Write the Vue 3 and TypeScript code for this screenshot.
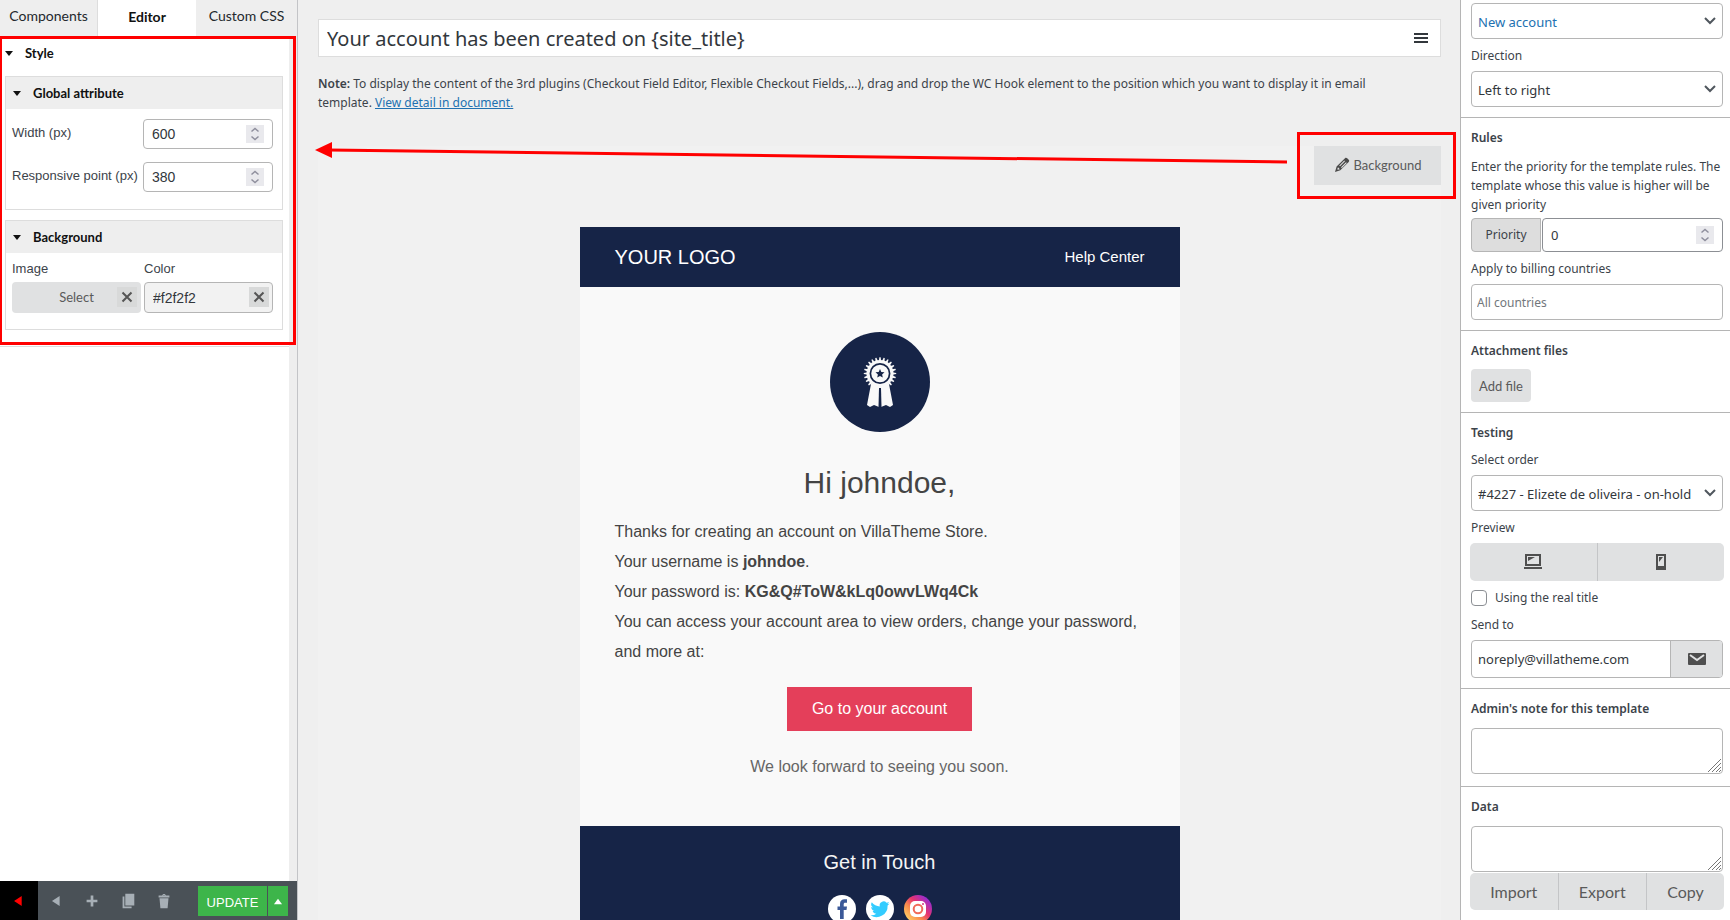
<script setup lang="ts">
import { ref } from 'vue'

const tabs = ['Components', 'Editor', 'Custom CSS']
const activeTab = ref('Editor')
const subject = ref('Your account has been created on {site_title}')
const width = ref(600)
const responsive = ref(380)
const color = ref('#f2f2f2')
const priority = ref(0)
const countries = ref('')
const realTitle = ref(false)
const sendTo = ref('noreply@villatheme.com')
const note = ref('')
const data = ref('')
const dataActions = ['Import', 'Export', 'Copy']

const teeth = Array.from({ length: 24 }, (_, i) => i * 15)
</script>

<template>
  <div class="app">
    <aside class="left">
      <nav class="tabs">
        <button
          v-for="tab in tabs"
          :key="tab"
          type="button"
          class="tab"
          :class="{ active: tab === activeTab }"
          @click="activeTab = tab"
        >{{ tab }}</button>
      </nav>

      <div class="panel">
        <div class="style-area">
          <h2 class="style-title"><i class="caret"></i>Style</h2>

          <section class="group">
            <h3 class="group-title"><i class="caret"></i>Global attribute</h3>
            <div class="group-body">
              <div class="attr">
                <label for="width">Width (px)</label>
                <div class="number">
                  <input id="width" v-model="width" type="number" />
                  <span class="spin"><svg viewBox="0 0 18 18"><path d="M5.500 6.500 9 3.500l3.500 3M5.500 11.500 9 14.500l3.500-3" /></svg></span>
                </div>
              </div>
              <div class="attr">
                <label for="responsive">Responsive point (px)</label>
                <div class="number">
                  <input id="responsive" v-model="responsive" type="number" />
                  <span class="spin"><svg viewBox="0 0 18 18"><path d="M5.500 6.500 9 3.500l3.500 3M5.500 11.500 9 14.500l3.500-3" /></svg></span>
                </div>
              </div>
            </div>
          </section>

          <section class="group">
            <h3 class="group-title"><i class="caret"></i>Background</h3>
            <div class="pair">
              <div class="cell">
                <span class="cell-label">Image</span>
                <div class="picker">
                  <button type="button" class="select-image">Select</button>
                  <button type="button" class="clear" aria-label="Clear image"><svg viewBox="0 0 20 20"><path d="m5.500 5.500 9 9m0-9-9 9" /></svg></button>
                </div>
              </div>
              <div class="cell">
                <label class="cell-label" for="color">Color</label>
                <div class="picker">
                  <input id="color" v-model="color" type="text" class="color-input" />
                  <button type="button" class="clear" aria-label="Clear color"><svg viewBox="0 0 20 20"><path d="m5.500 5.500 9 9m0-9-9 9" /></svg></button>
                </div>
              </div>
            </div>
          </section>
          <div class="mark mark-panel"></div>
        </div>
      </div>

      <footer class="toolbar">
        <button type="button" class="tool tool-exit" aria-label="Exit"><svg viewBox="0 0 20 20"><path d="M13 4.500v11L4.500 10z" /></svg></button>
        <button type="button" class="tool" aria-label="Back"><svg viewBox="0 0 20 20"><path d="M14 4.500v11L5.500 10z" /></svg></button>
        <button type="button" class="tool" aria-label="Add"><svg viewBox="0 0 20 20"><path d="M8.500 4h3v4.500H16v3h-4.500V16h-3v-4.500H4v-3h4.500z" /></svg></button>
        <button type="button" class="tool" aria-label="Duplicate"><svg viewBox="0 0 20 20"><path d="M7 2h10v13H7zM4 5h2v11h8v2H4z" /></svg></button>
        <button type="button" class="tool" aria-label="Delete"><svg viewBox="0 0 20 20"><path d="M8 4c0-2.500 4-2.500 4 0h4v2H4V4h4zm1 0h2c0-1-2-1-2 0zM5 7h10l-1 11H6z" /></svg></button>
        <div class="update">
          <button type="button" class="update-main">UPDATE</button>
          <button type="button" class="update-more" aria-label="More update options"><svg viewBox="0 0 20 20"><path d="m5.500 13.500 4.500-6 4.500 6z" /></svg></button>
        </div>
      </footer>
    </aside>

    <main class="main">
      <div class="subject">
        <input v-model="subject" type="text" aria-label="Email subject" />
        <button type="button" class="menu" aria-label="Shortcodes"><svg viewBox="0 0 14 10"><path d="M0 0h14v2H0zM0 4h14v2H0zM0 8h14v2H0z" /></svg></button>
      </div>
      <p class="note">
        <strong>Note:</strong> To display the content of the 3rd plugins (Checkout Field Editor, Flexible Checkout Fields,...), drag and drop the WC Hook element to the position which you want to display it in email template. <a href="#">View detail in document.</a>
      </p>

      <div class="canvas">
        <div class="canvas-top">
          <svg class="arrow" height="24">
            <line x1="14" y1="9" x2="100%" y2="21" />
            <polygon points="0,9 17,1 17,17" />
          </svg>
          <div class="bg-wrap">
            <button type="button" class="bg-button">
              <svg viewBox="0 0 16 16"><path d="M11 1.200c.8-.7 1.500-.5 2.200.1l1.500 1.500c.6.700.7 1.400 0 2.100L6.300 13.300 1 15l1.600-5.500zM4 10.200l-.7 2 .6.600 2-.6zM10.300 3.600 5.200 8.700l.8.600 5-5zM12 5.200l-5 5 .8.800 5-5z" fill-rule="evenodd" /></svg>
              Background
            </button>
            <div class="mark mark-button"></div>
          </div>
        </div>

        <article class="email">
          <header class="email-head">
            <span class="logo">YOUR LOGO</span>
            <a href="#" class="help">Help Center</a>
          </header>
          <div class="email-body">
            <svg class="badge" viewBox="0 0 100 100">
              <circle cx="50" cy="50" r="50" fill="#162447" />
              <g fill="#f9f9f9">
                <path d="M41 52h18l4 21-3 2-4-2-5 2-.5-19h-1L49 75l-5-2-4 2-3-2z" />
                <circle cx="50" cy="41.500" r="13.500" />
                <path v-for="a in teeth" :key="a" d="M48.700 29.500 49.400 25.300h1.200l.7 4.200z" :transform="`rotate(${a} 50 41.5)`" />
              </g>
              <circle cx="50" cy="41.500" r="9.600" fill="none" stroke="#162447" stroke-width="1.700" />
              <path d="m50 37 1.300 3 3.200.3-2.400 2.100.7 3.200-2.800-1.700-2.800 1.700.7-3.200-2.400-2.100 3.200-.3z" fill="#162447" />
              <path d="M49 56h2l.5 19h-3z" fill="#162447" />
            </svg>
            <h1 class="greeting">Hi johndoe,</h1>
            <div class="copy">
              <p>Thanks for creating an account on VillaTheme Store.</p>
              <p>Your username is <b>johndoe</b>.</p>
              <p>Your password is: <b>KG&amp;Q#ToW&amp;kLq0owvLWq4Ck</b></p>
              <p>You can access your account area to view orders, change your password, and more at:</p>
            </div>
            <a href="#" class="cta">Go to your account</a>
            <p class="closing">We look forward to seeing you soon.</p>
          </div>
          <footer class="email-foot">
            <h2>Get in Touch</h2>
            <div class="social">
              <a href="#" aria-label="Facebook"><svg viewBox="0 0 28 28"><circle cx="14" cy="14" r="14" fill="#fff" /><path d="M12 24v-9H9.500v-3.500H12V9c0-3.200 1.800-4.700 4.600-4.700H19v3.400h-1.700c-1.200 0-1.600.6-1.600 1.600v2.200H19l-.5 3.500h-2.800v9z" fill="#3b5998" /></svg></a>
              <a href="#" aria-label="Twitter"><svg viewBox="0 0 28 28"><circle cx="14" cy="14" r="14" fill="#fff" /><path d="M23.500 8.400c-.7.300-1.400.5-2.200.6.800-.5 1.400-1.200 1.700-2.100-.8.400-1.600.8-2.500.9a3.900 3.900 0 0 0-6.700 3.600c-3.200-.2-6.100-1.700-8-4.100a3.900 3.900 0 0 0 1.200 5.200c-.6 0-1.200-.2-1.800-.5 0 1.900 1.300 3.500 3.200 3.900-.6.200-1.200.2-1.800.1.500 1.600 2 2.700 3.700 2.700A7.900 7.900 0 0 1 4.500 20.300a11.100 11.100 0 0 0 17.100-9.900c.8-.5 1.400-1.200 1.900-2z" fill="#33ccff" /></svg></a>
              <a href="#" aria-label="Instagram"><svg viewBox="0 0 28 28"><defs><linearGradient id="insta" x1="0.100" y1="0.900" x2="0.900" y2="0.100"><stop offset="0" stop-color="#ffd567" /><stop offset="0.350" stop-color="#f98a4b" /><stop offset="0.600" stop-color="#e6336f" /><stop offset="1" stop-color="#8a2be0" /></linearGradient></defs><circle cx="14" cy="14" r="14" fill="url(#insta)" /><rect x="6" y="6" width="16" height="16" rx="5" fill="#fff" /><circle cx="14" cy="14" r="4.300" fill="none" stroke="#f06a58" stroke-width="2" /><circle cx="19" cy="9" r="1" fill="#d63384" /></svg></a>
            </div>
          </footer>
        </article>
      </div>
    </main>

    <aside class="right">
      <section class="box box-first">
        <div class="select">
          <select class="blue" aria-label="Email type"><option>New account</option></select>
          <svg viewBox="0 0 12 8"><path d="m1 1 5 5 5-5" /></svg>
        </div>
        <label class="field-label" for="direction">Direction</label>
        <div class="select">
          <select id="direction"><option>Left to right</option></select>
          <svg viewBox="0 0 12 8"><path d="m1 1 5 5 5-5" /></svg>
        </div>
      </section>

      <section class="box">
        <h2 class="box-title">Rules</h2>
        <p class="hint">Enter the priority for the template rules. The template whose this value is higher will be given priority</p>
        <div class="priority">
          <label for="priority">Priority</label>
          <div class="number">
            <input id="priority" v-model="priority" type="number" />
            <span class="spin"><svg viewBox="0 0 18 18"><path d="M5.500 6.500 9 3.500l3.500 3M5.500 11.500 9 14.500l3.500-3" /></svg></span>
          </div>
        </div>
        <label class="field-label" for="countries">Apply to billing countries</label>
        <input id="countries" v-model="countries" class="text-input" type="text" placeholder="All countries" />
      </section>

      <section class="box">
        <h2 class="box-title">Attachment files</h2>
        <button type="button" class="add-file">Add file</button>
      </section>

      <section class="box">
        <h2 class="box-title">Testing</h2>
        <label class="field-label" for="order">Select order</label>
        <div class="select">
          <select id="order"><option>#4227 - Elizete de oliveira - on-hold</option></select>
          <svg viewBox="0 0 12 8"><path d="m1 1 5 5 5-5" /></svg>
        </div>
        <span class="field-label">Preview</span>
        <div class="joined">
          <button type="button" aria-label="Desktop preview"><svg viewBox="0 0 18 16"><path d="M1 0h16v12H1zM3 2v8h12V2zM0 13h18v2H0zM4 3h7L4 7z" fill-rule="evenodd" /></svg></button>
          <button type="button" aria-label="Mobile preview"><svg viewBox="0 0 18 16"><path d="M4 0h10v16H4zM6 2v10h6V2zM7 3h4L7 8z" fill-rule="evenodd" /></svg></button>
        </div>
        <div class="check">
          <input id="real" v-model="realTitle" type="checkbox" />
          <label for="real">Using the real title</label>
        </div>
        <label class="field-label" for="send">Send to</label>
        <div class="send">
          <input id="send" v-model="sendTo" type="email" />
          <button type="button" aria-label="Send test email"><svg viewBox="0 0 18 12"><rect width="18" height="12" rx="1" /><path d="m2 2 7 5 7-5" fill="none" stroke="#e0e1e2" stroke-width="2" /></svg></button>
        </div>
      </section>

      <section class="box box-note">
        <h2 class="box-title"><label for="admin-note">Admin's note for this template</label></h2>
        <div class="area">
          <textarea id="admin-note" v-model="note"></textarea>
          <svg viewBox="0 0 15 15"><path d="M1 14 14 1M5 14l9-9M9 14l5-5M12 14l2-2" /></svg>
        </div>
      </section>

      <section class="box">
        <h2 class="box-title"><label for="data">Data</label></h2>
        <div class="area">
          <textarea id="data" v-model="data"></textarea>
          <svg viewBox="0 0 15 15"><path d="M1 14 14 1M5 14l9-9M9 14l5-5M12 14l2-2" /></svg>
        </div>
        <div class="joined joined-text">
          <button v-for="a in dataActions" :key="a" type="button">{{ a }}</button>
        </div>
      </section>
    </aside>
  </div>
</template>

<style>
html,
body {
  margin: 0;
  background: #efefef;
}
</style>

<style scoped>
.app {
  display: grid;
  grid-template-columns: 298px minmax(0, 1fr) 270px;
  height: 100vh;
  overflow: hidden;
  color: #3c434a;
  font: 12px/20px "Noto Sans", "Open Sans", sans-serif;
}
.app *,
.app *::before {
  box-sizing: border-box;
}
h1,
h2,
h3,
p {
  margin: 0;
}
button,
input,
select,
textarea {
  margin: 0;
  padding: 0;
  border: 0;
  border-radius: 0;
  outline: 0;
  background: none;
  font: inherit;
  color: inherit;
}
input[type='number'] {
  appearance: textfield;
}
svg {
  display: block;
}

/* left panel */
.left {
  display: flex;
  flex-direction: column;
  min-height: 0;
  background: #fff;
  border-right: 1px solid #c3c4c7;
  font-family: Lato, sans-serif;
}
.tabs {
  display: grid;
  grid-template-columns: 97px 99px 1fr;
  height: 36px;
  background: #eee;
}
.tab {
  padding-bottom: 4px;
  font-size: 14px;
  color: #23282d;
}
.tab.active {
  background: #fff;
  border-left: 1px solid #ddd;
  padding-bottom: 2px;
  font-weight: 700;
  color: #111;
}
.panel {
  flex: 1;
  min-height: 0;
  border-right: 8px solid #eee;
}
.style-area {
  position: relative;
  padding: 0 6px 16px 5px;
  border-bottom: 1px solid #ddd;
}
.style-title,
.group-title {
  display: flex;
  align-items: center;
  font-size: 13px;
  font-weight: 700;
  color: #111;
}
.style-title {
  height: 34px;
  gap: 12px;
  margin-bottom: 6px;
}
.group-title {
  height: 32px;
  padding-left: 7px;
  gap: 12px;
  background: #eee;
}
.caret {
  border: 4px solid transparent;
  border-top: 5px solid #111;
  border-bottom: 0;
}
.group {
  border: 1px solid #ddd;
}
.group + .group {
  margin-top: 10px;
}
.group-body {
  display: grid;
  gap: 13px;
  padding: 10px 9px 17px 6px;
}
.attr {
  display: grid;
  grid-template-columns: 1fr 130px;
}
.attr label,
.cell-label {
  font: 13px/27px "Liberation Sans", Arial, sans-serif;
}
.number {
  position: relative;
  display: flex;
  border: 1px solid #b5b5b5;
  border-radius: 4px;
  background: #fff;
}
.number input {
  width: 100%;
  height: 28px;
  padding: 0 8px;
  font: 14px "Liberation Sans", Arial, sans-serif;
  color: #32373c;
}
.spin {
  position: absolute;
  right: 8px;
  top: 5px;
  width: 18px;
  height: 18px;
  background: #e9e9ed;
}
.spin path {
  fill: none;
  stroke: #8f8f9d;
  stroke-width: 1.5;
}
.pair {
  display: grid;
  grid-template-columns: 1fr 1fr;
  gap: 3px;
  padding: 2px 9px 16px 6px;
}
.cell-label {
  display: block;
}
.picker {
  position: relative;
  display: flex;
}
.select-image {
  width: 100%;
  height: 31px;
  padding-bottom: 1px;
  border-radius: 4px;
  background: #e0e1e2;
  font-size: 13px;
  color: #5a5a5a;
}
.color-input {
  width: 100%;
  height: 31px;
  padding: 0 8px;
  border: 1px solid #b5b5b5;
  border-radius: 4px;
  background: #f2f2f2;
  font: 14px "Liberation Sans", Arial, sans-serif;
  color: #32373c;
}
.clear {
  position: absolute;
  top: 5px;
  right: 4px;
  width: 20px;
  height: 20px;
  background: #d8d9d9;
}
.clear path {
  stroke: #555;
  stroke-width: 2;
}
.mark {
  position: absolute;
  border: 3px solid #f00;
  pointer-events: none;
}
.mark-panel {
  inset: 0 -7px 1px -1px;
}

.toolbar {
  display: flex;
  height: 40px;
  background: #4a5157;
}
.tool {
  display: grid;
  place-items: center;
  width: 36px;
}
.tool-exit {
  width: 38px;
  background: #000;
}
.tool svg,
.update svg {
  width: 18px;
  height: 18px;
  fill: #a7afb6;
}
.tool-exit svg {
  fill: #f00;
}
.update {
  display: flex;
  gap: 1px;
  margin: 5px 9px 5px auto;
}
.update-main,
.update-more {
  display: grid;
  place-items: center;
  width: 20px;
  background: #3db54a;
  color: #fff;
}
.update-main {
  width: 69px;
  padding-top: 2px;
  font: 13px "Liberation Sans", Arial, sans-serif;
}
.update-more svg {
  fill: #fff;
}

/* main column */
.main {
  display: flex;
  flex-direction: column;
  min-height: 0;
  padding: 19px 19px 0 20px;
}
.subject {
  display: flex;
  align-items: center;
  height: 38px;
  padding: 0 12px 0 8px;
  border: 1px solid #ddd;
  background: #fff;
}
.subject input {
  flex: 1;
  height: 36px;
  font-size: 20px;
  color: #32373c;
}
.menu svg {
  width: 14px;
  height: 10px;
  fill: #32373c;
}
.note {
  padding: 17px 32px 34px 0;
  line-height: 19px;
}
.note strong {
  font-weight: 600;
}
.note a {
  color: #2271b1;
}
.canvas {
  flex: 1;
  min-height: 0;
  background: #f1f1f1;
}
.canvas-top {
  position: relative;
  display: flex;
  justify-content: flex-end;
  height: 81px;
}
.arrow {
  position: absolute;
  left: -3px;
  top: -5px;
  width: calc(100% - 151px);
  overflow: visible;
}
.arrow line {
  stroke: #f00;
  stroke-width: 3;
}
.arrow polygon {
  fill: #f00;
}
.bg-wrap {
  position: relative;
  height: 39px;
}
.bg-button {
  display: flex;
  align-items: center;
  justify-content: center;
  gap: 4px;
  width: 127px;
  height: 39px;
  padding-bottom: 1px;
  background: #e0e1e2;
  font: 13px Lato, sans-serif;
  color: #5a5a5a;
}
.bg-button svg {
  width: 16px;
  height: 16px;
  fill: #4a4a4a;
}
.mark-button {
  inset: -14px -15px -14px -17px;
}

.email {
  width: 600px;
  margin: 0 auto;
  background: #f9f9f9;
  font-family: "Liberation Sans", Arial, sans-serif;
  color: #444;
}
.email-head {
  display: flex;
  align-items: center;
  justify-content: space-between;
  height: 60px;
  padding: 0 35px;
  background: #162447;
  color: #fff;
}
.logo {
  font-size: 20px;
}
.help {
  font-size: 15px;
  color: #fff;
  text-decoration: none;
}
.email-body {
  display: flex;
  flex-direction: column;
  align-items: center;
  padding: 45px 35px 48px;
}
.badge {
  width: 100px;
  height: 100px;
}
.greeting {
  margin-top: 31px;
  font-size: 30px;
  line-height: 40px;
  font-weight: 400;
}
.copy {
  align-self: stretch;
  margin-top: 14px;
  font-size: 16px;
  line-height: 30px;
}
.cta {
  margin-top: 20px;
  padding: 0 25px;
  background: #e43f5a;
  font-size: 16px;
  line-height: 44px;
  color: #fff;
  text-decoration: none;
}
.closing {
  margin-top: 25px;
  font-size: 16px;
  line-height: 22px;
  color: #666;
}
.email-foot {
  display: flex;
  flex-direction: column;
  align-items: center;
  height: 140px;
  padding-top: 24px;
  background: #162447;
}
.email-foot h2 {
  font-size: 20px;
  line-height: 24px;
  font-weight: 400;
  color: #f5f5f5;
}
.social {
  display: flex;
  gap: 10px;
  margin-top: 21px;
}
.social svg {
  width: 28px;
  height: 28px;
}

/* right column */
.right {
  border-left: 1px solid #b5b5b5;
  background: #fff;
}
.box {
  padding: 10px 7px 10px 10px;
  border-bottom: 1px solid #b5b5b5;
}
.box-first {
  padding-top: 3px;
}
.box-note {
  padding-bottom: 12px;
}
.box-title {
  font-size: 12px;
  line-height: 20px;
  font-weight: 600;
}
.field-label {
  display: block;
  margin: 7px 0 5px;
}
.select {
  position: relative;
}
.select select {
  display: block;
  appearance: none;
  width: 100%;
  height: 36px;
  padding: 1px 6px 0;
  border: 1px solid #b5b5b5;
  border-radius: 4px;
  background: #fff;
  font-size: 13px;
  color: #32373c;
}
.select .blue {
  color: #2271b1;
}
.select svg {
  position: absolute;
  right: 7px;
  top: 14px;
  width: 12px;
  height: 8px;
  pointer-events: none;
}
.select path {
  fill: none;
  stroke: #50575e;
  stroke-width: 2;
}
.hint {
  margin: 9px -6px 0 0;
  line-height: 19px;
}
.priority {
  display: grid;
  grid-template-columns: 70px 1fr;
  gap: 1px;
  margin-top: 4px;
}
.priority > label {
  border: 1px solid #b5b5b5;
  border-radius: 4px 0 0 4px;
  background: #ddd;
  line-height: 32px;
  text-align: center;
}
.priority .number {
  border-color: #8c8f94;
}
.priority .number input {
  height: 32px;
  font: 13px "Noto Sans", sans-serif;
}
.priority .spin {
  top: 7px;
}
.text-input {
  display: block;
  width: 100%;
  height: 36px;
  padding: 0 5px;
  border: 1px solid #b5b5b5;
  border-radius: 4px;
}
.text-input::placeholder {
  color: #72777c;
}
.add-file {
  display: block;
  height: 33px;
  margin-top: 8px;
  padding: 0 8px;
  border-radius: 4px;
  background: #e0e1e2;
  font: 13px Lato, sans-serif;
  color: #5a5a5a;
}
.joined {
  display: flex;
  height: 38px;
  margin-left: -1px;
  margin-right: -1px;
  border-radius: 5px;
  background: #e0e1e2;
}
.joined button {
  display: grid;
  place-items: center;
  flex: 1;
  color: #5a5a5a;
}
.joined button + button {
  border-left: 1px solid #c4c5c7;
}
.joined svg {
  width: 18px;
  height: 16px;
  fill: #4f4f4f;
}
.joined-text {
  height: 37px;
  margin-top: 1px;
}
.joined-text button {
  flex: auto;
  font: 16px Lato, sans-serif;
}
.check {
  display: flex;
  align-items: center;
  gap: 8px;
  margin-top: 7px;
}
.check input {
  appearance: none;
  width: 16px;
  height: 16px;
  border: 1px solid #8c8f94;
  border-radius: 4px;
  background: #fff;
}
.check input:checked {
  background: #2271b1;
}
.send {
  display: flex;
  height: 38px;
  border: 1px solid #b5b5b5;
  border-radius: 4px;
  overflow: hidden;
}
.send input {
  flex: 1;
  min-width: 0;
  padding: 0 6px;
  font-size: 13px;
  color: #32373c;
}
.send button {
  display: grid;
  place-items: center;
  width: 52px;
  border-left: 1px solid #b5b5b5;
  background: #e0e1e2;
}
.send svg {
  width: 18px;
  height: 12px;
  fill: #4f4f4f;
}
.area {
  position: relative;
  margin-top: 9px;
}
.area textarea {
  display: block;
  width: 100%;
  height: 46px;
  padding: 4px 6px;
  border: 1px solid #b5b5b5;
  border-radius: 4px;
  resize: none;
}
.area svg {
  position: absolute;
  right: 1px;
  bottom: 1px;
  width: 15px;
  height: 15px;
  pointer-events: none;
}
.area path {
  stroke: #777;
}
</style>
